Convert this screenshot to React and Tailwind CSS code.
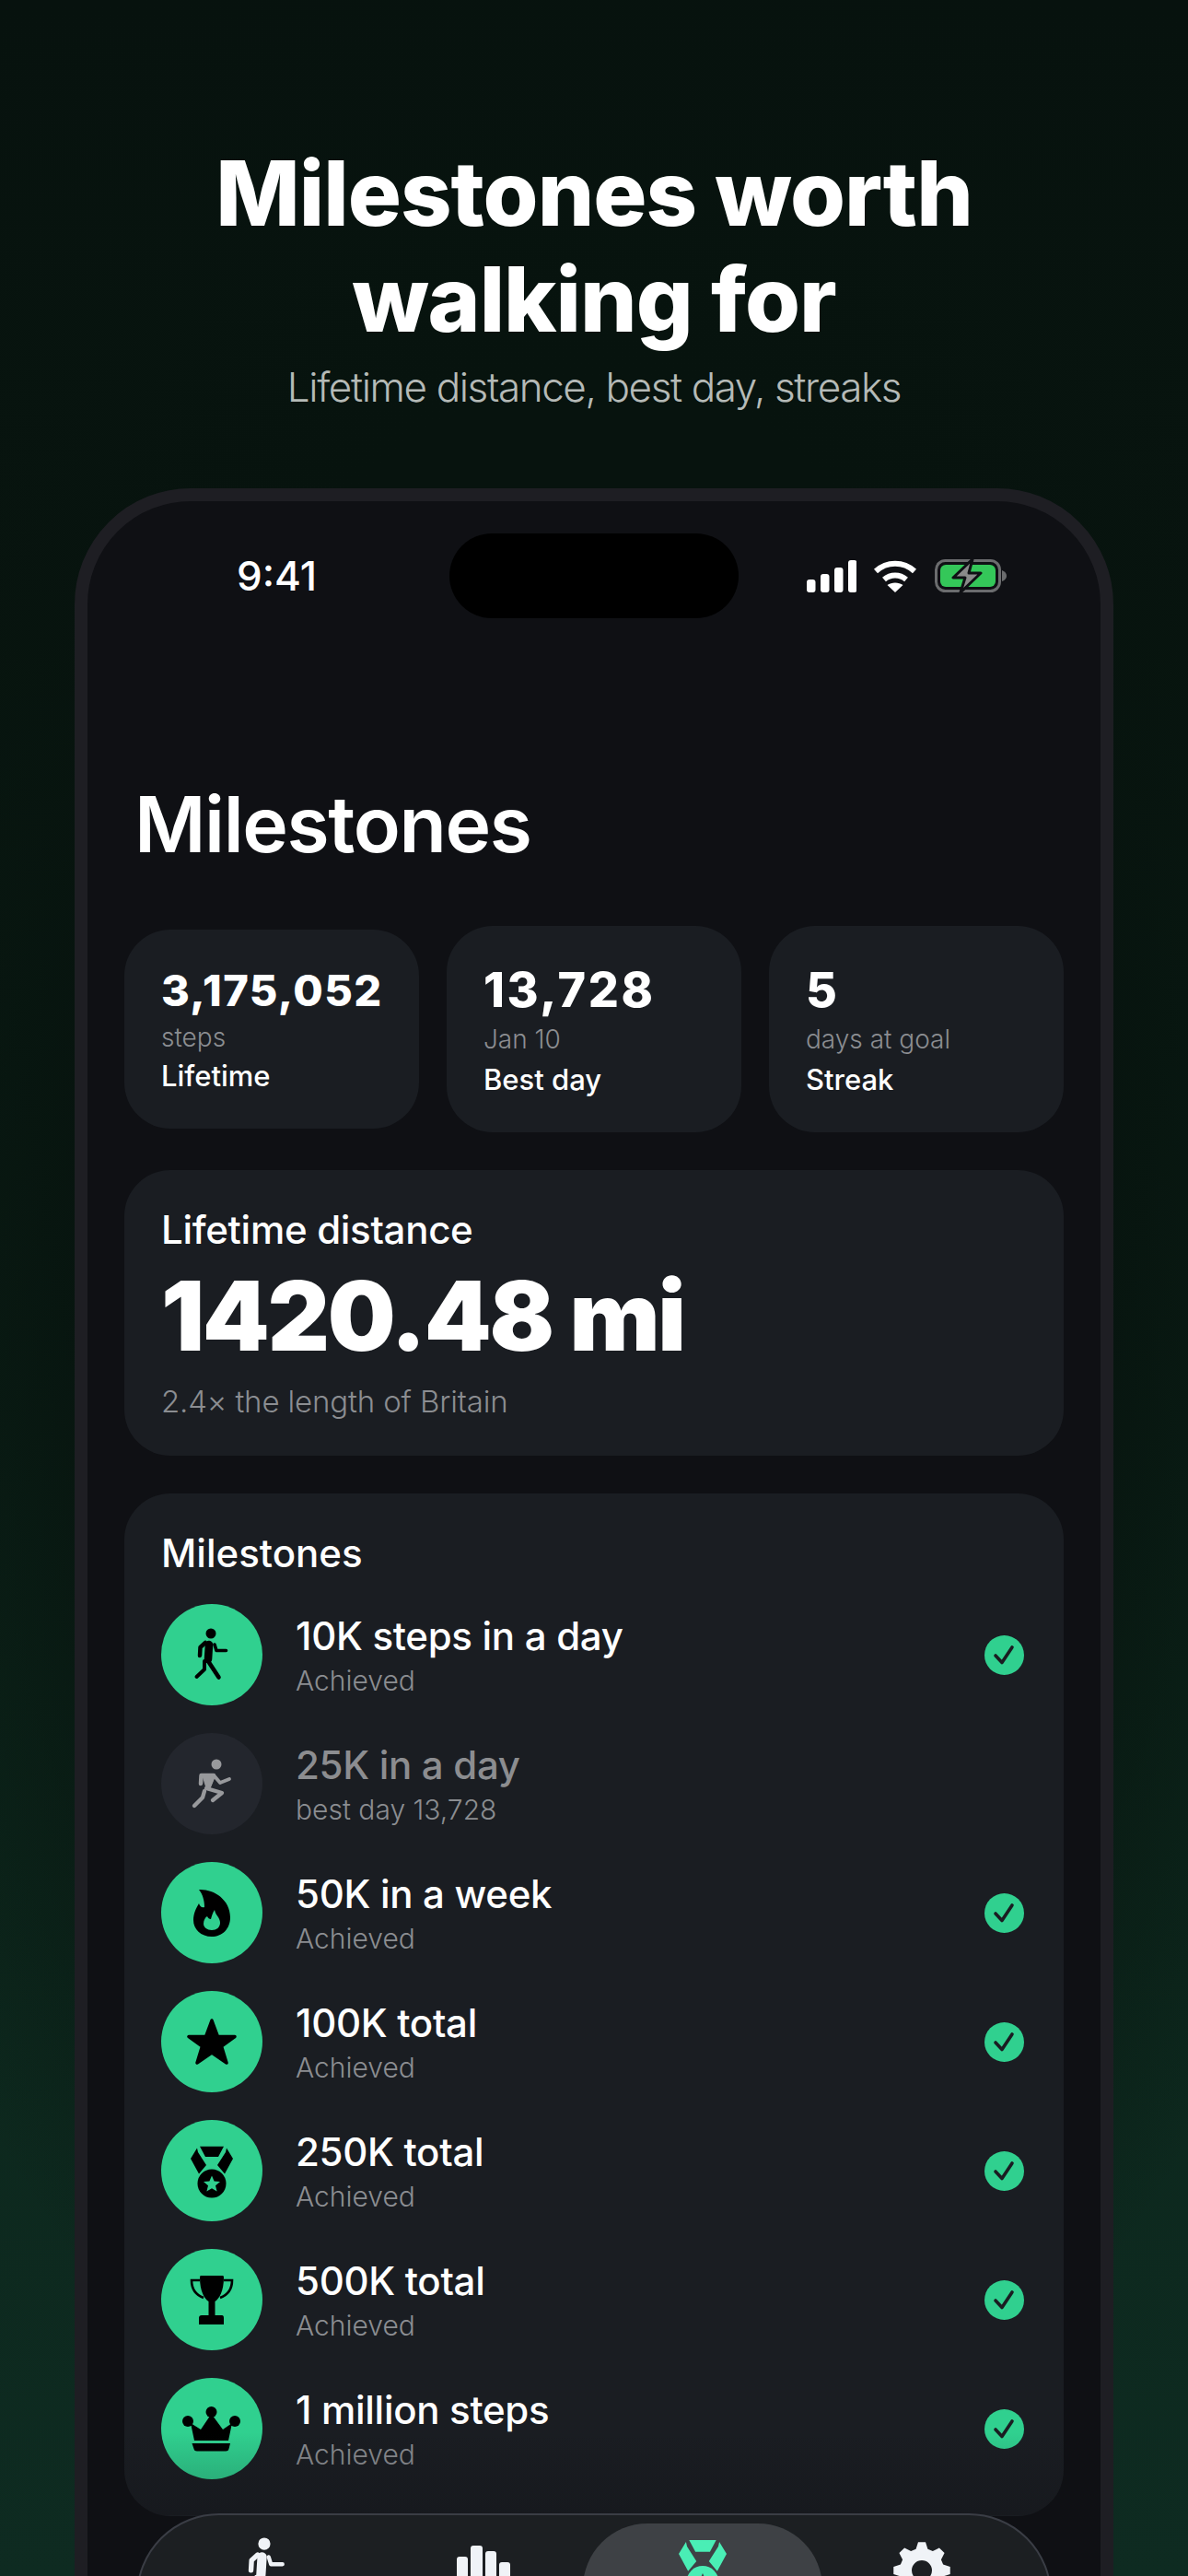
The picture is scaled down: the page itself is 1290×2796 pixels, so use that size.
const gearPath = (() => {
  // 8 tooth gear around 40,40
  const teeth = 8, R = 31, root = 24
  let d = ''
  for (let i = 0; i < teeth; i++) {
    const a = (i / teeth) * Math.PI * 2 - Math.PI / 2
    const pts = [[root, -0.27], [R, -0.13], [R, 0.13], [root, 0.27]]
    pts.forEach(([r, o], j) => {
      const x = (40 + r * Math.cos(a + o)).toFixed(2)
      const y = (40 + r * Math.sin(a + o)).toFixed(2)
      d += (i === 0 && j === 0 ? 'M' : 'L') + x + ' ' + y + ' '
    })
  }
  return d + 'Z M51 40 A11 11 0 1 0 29 40 A11 11 0 1 0 51 40 Z'
})()

function Walk({ c }) {
  return (
    <g fill="none" stroke={c} strokeLinecap="round" strokeLinejoin="round">
      <circle cx="54" cy="32" r="5.5" fill={c} stroke="none" />
      <path d="M52 44 L51 60" strokeWidth="8.5" />
      <path d="M48 42 L42.5 47 L42 56" strokeWidth="4.5" />
      <path d="M58 44 L60 50.5 L70.5 50.5" strokeWidth="3.6" />
      <path d="M47 62 L47 71 L38.5 79" strokeWidth="4" />
      <path d="M51 62 L62.5 79.5" strokeWidth="4.6" />
    </g>
  )
}

function Run({ c }) {
  return (
    <g fill="none" stroke={c} strokeLinecap="round" strokeLinejoin="round">
      <circle cx="60" cy="34" r="5.5" fill={c} stroke="none" />
      <path d="M43 55 L43.5 46 L57 46 L52 58" strokeWidth="4.5" />
      <path d="M47 47 L56 47 L51 60 Z" fill={c} strokeWidth="4.5" />
      <path d="M58 47 L64 54 L74 50" strokeWidth="3.8" />
      <path d="M49 60 L66 65 L56 73" strokeWidth="4.4" />
      <path d="M47 63 L45 70 L36 79" strokeWidth="4.4" />
    </g>
  )
}

function Flame() {
  return (
    <g>
      <path fill="#000" d="M41 30 C56 29 75 40 75 60 C75 73 66 81 55 81 C43 81 35 73 35 63 C35 56 38 50 41 45 C42 48 44 50 47 49 C47 42 45 35 41 30 Z" />
      <path fill="#30d08f" d="M58 52 C59 58 64 60 64 66 C64 71 60 74 55 74 C50 74 46 71 46 67 C46 63 48 60 50 59 C51 61 52 62 54 62 C55 58 56 55 58 52 Z" />
    </g>
  )
}

function Star() {
  return <path d="M55 32 L61.5 49.5 L80 49.5 L65.5 60 L71 78 L55 67 L39 78 L44.5 60 L30 49.5 L48.5 49.5 Z" fill="#000" stroke="#000" strokeWidth="3.5" strokeLinejoin="round" />
}

function Medal({ c, hole }) {
  return (
    <g fill={c}>
      <path d="M42 28.7 L68 28.7 L62 40 L48 40 Z" />
      <path d="M39 30.5 L32 42 L41 58.5 L49 49 L40 35 Z" />
      <path d="M71 30.5 L78 42 L69 58.5 L61 49 L70 35 Z" />
      <circle cx="55" cy="69" r="15.5" />
      <path d="M55 60.5 L57.6 66.5 L64 67 L59 71.2 L60.6 77.5 L55 74.2 L49.4 77.5 L51 71.2 L46 67 L52.4 66.5 Z" fill={hole} />
    </g>
  )
}

function Trophy() {
  return (
    <g>
      <path fill="#000" d="M43 29 L67 29 Q68 29 68 31 C68 46 63 54 58.5 57 L58.5 72 L66 72 Q68 72 68 75 L68 82 L41 82 L41 75 Q41 72 44 72 L51.5 72 L51.5 57 C47 54 42 46 42 31 Q42 29 43 29 Z" />
      <path fill="none" stroke="#000" strokeWidth="2.6" d="M42 34 L33 34 C33 44 38 50 46 53 M68 34 L77 34 C77 44 72 50 64 53" />
    </g>
  )
}

function Crown() {
  return (
    <g fill="#000">
      <circle cx="54.5" cy="37" r="6" />
      <circle cx="29" cy="47" r="6" />
      <circle cx="80" cy="47" r="6" />
      <path d="M32 49 L43 56 L54.5 39 L67 56 L77 49 L73 68 L36 68 Z" />
      <path d="M33.5 71 L75 71 L73.5 77 Q73 79.5 70 79.5 L39 79.5 Q36 79.5 35.5 77 Z" />
    </g>
  )
}

const rows = [
  { title: '10K steps in a day', sub: 'Achieved', icon: <Walk c="#000" />, done: true },
  { title: '25K in a day', sub: 'best day 13,728', icon: <Run c="#98999c" />, done: false },
  { title: '50K in a week', sub: 'Achieved', icon: <Flame />, done: true },
  { title: '100K total', sub: 'Achieved', icon: <Star />, done: true },
  { title: '250K total', sub: 'Achieved', icon: <Medal c="#000" hole="#30d08f" />, done: true },
  { title: '500K total', sub: 'Achieved', icon: <Trophy />, done: true },
  { title: '1 million steps', sub: 'Achieved', icon: <Crown />, done: true },
]

function Check() {
  return (
    <svg width="43" height="43" viewBox="0 0 43 43">
      <circle cx="21.5" cy="21.5" r="21.5" fill="#30d08f" />
      <path d="M12 22 L19 29.5 L30 13" fill="none" stroke="#1a1d22" strokeWidth="3.6" strokeLinecap="round" strokeLinejoin="round" />
    </svg>
  )
}

function Row({ title, sub, icon, done }) {
  return (
    <div className="flex h-[110px] items-center">
      <div className={'h-[110px] w-[110px] shrink-0 rounded-full ' + (done ? 'bg-[#30d08f]' : 'bg-[#23262d]')}>
        <svg width="110" height="110" viewBox="0 0 110 110">{icon}</svg>
      </div>
      <div className="ml-[36px] h-[110px] flex-1 pt-[10px]">
        <div className={'text-[42px] leading-[50px] font-medium tracking-[-0.3px] ' + (done ? 'text-white' : 'text-[#8c8d90]')}>{title}</div>
        <div className="mt-[5px] text-[30px] leading-[36px] font-light text-[#8b8d91]">{sub}</div>
      </div>
      {done && <div className="mr-[3px]"><Check /></div>}
    </div>
  )
}

function Stat({ value, sub, label, tall }) {
  return (
    <div className={'w-[320px] rounded-[50px] bg-[#1a1d22] px-[40px] ' + (tall ? 'h-[224px] pt-[44px]' : 'h-[216px] pt-[40px]')}>
      <div className={'leading-[52px] font-extrabold text-white ' + (tall ? 'text-[52px] tracking-[2.6px]' : 'text-[47px] tracking-[1.4px]')}>{value}</div>
      <div className={'text-[28px] leading-[36px] font-light text-[#8b8d91] ' + (tall ? 'mt-[9px]' : 'mt-[7px]')}>{sub}</div>
      <div className={'text-[31px] leading-[38px] font-medium text-white ' + (tall ? 'mt-[7px]' : 'mt-[5px]')}>{label}</div>
    </div>
  )
}

function StatusIcons() {
  return (
    <div className="ml-[74px] flex items-center gap-[19px]">
      <svg width="54" height="35" viewBox="0 0 54 35" fill="#fff">
        <rect x="0" y="21" width="9.5" height="14" rx="3" />
        <rect x="15" y="15" width="9.5" height="20" rx="3" />
        <rect x="30" y="8" width="9.5" height="27" rx="3" />
        <rect x="45" y="0" width="9.5" height="35" rx="3" />
      </svg>
      <svg width="48" height="35" viewBox="0 0 48 35" fill="none" stroke="#fff" className="-ml-[1px]">
        <path d="M3 12 C15 1 33 1 45 12" strokeWidth="6" />
        <path d="M12 21 C19 15 29 15 36 21" strokeWidth="6" />
        <path d="M24 35 L15.5 27 C20 23.5 28 23.5 32.5 27 Z" fill="#fff" stroke="none" />
      </svg>
      <svg width="78" height="36" viewBox="0 0 78 36">
        <rect x="1.5" y="1.5" width="69" height="33" rx="10" fill="none" stroke="#6b6c6e" strokeWidth="3" />
        <rect x="6" y="6" width="60" height="24" rx="6" fill="#34c759" />
        <path d="M73 12 Q78 14 78 18 Q78 22 73 24 Z" fill="#6b6c6e" />
        <path d="M41 0 L20 20 L33 20 L28 36 L50 15 L37 15 Z" fill="#8a8a8a" stroke="#0f1014" strokeWidth="3" strokeLinejoin="round" />
      </svg>
    </div>
  )
}

function Tab({ children, active, box }) {
  return (
    <div className="relative flex h-[120px] w-[238px] justify-center pt-[20px]">
      {active && <div className="absolute -left-[11px] top-[9px] h-[140px] w-[260px] rounded-[80px] bg-[#3e4145]"></div>}
      <svg width="80" height="80" viewBox={box} className="relative">{children}</svg>
    </div>
  )
}

export default function App() {
  return (
    <div className="flex h-[2796px] w-[1290px] flex-col items-center overflow-hidden bg-[radial-gradient(ellipse_70%_55%_at_50%_45%,#07130e_55%,rgba(7,19,14,0)_100%),linear-gradient(180deg,#07120e_0%,#08150f_25%,#0c261b_65%,#0e2b21_100%)] font-[Inter,sans-serif]">
      <h1 className="mt-[152px] text-center text-[97px] leading-[115px] font-extrabold tracking-[-1px] text-white">
        Milestones worth<br />walking for
      </h1>
      <p className="mt-[10px] text-[44px] leading-[56px] font-light tracking-[-1.4px] text-[#b5bab7]">Lifetime distance, best day, streaks</p>

      <div className="relative mt-[82px] h-[2400px] w-[1128px] shrink-0 overflow-hidden rounded-[126px] border-[14px] border-[#1e1e23] bg-[#0f1014] pt-[35px]">
        <div className="flex h-[92px] items-center pl-[162px]">
          <span className="w-[231px] text-[44px] font-medium text-white">9:41</span>
          <div className="h-[92px] w-[314px] rounded-full bg-black"></div>
          <StatusIcons />
        </div>

        <h2 className="mt-[174px] pl-[51px] text-[84px] leading-[100px] font-semibold tracking-[-1.4px] text-white">Milestones</h2>

        <div className="px-[40px]">
          <div className="mt-[60px] flex items-center justify-between">
            <Stat value="3,175,052" sub="steps" label="Lifetime" />
            <Stat value="13,728" sub="Jan 10" label="Best day" tall />
            <Stat value="5" sub="days at goal" label="Streak" tall />
          </div>

          <div className="mt-[41px] h-[310px] rounded-[50px] bg-[#1a1d22] px-[40px] pt-[40px]">
            <div className="text-[42px] leading-[50px] font-medium tracking-[-0.3px] text-white">Lifetime distance</div>
            <div className="mt-[13px] text-[104px] leading-[110px] font-black tracking-[-2.2px] text-white">1420.48 mi</div>
            <div className="mt-[18px] text-[33px] leading-[40px] font-light tracking-[-0.15px] text-[#8b8d91]">2.4× the length of Britain</div>
          </div>

          <div className="mt-[41px] h-[1110px] rounded-[50px] bg-[#1a1d22] px-[40px] pt-[40px]">
            <div className="text-[42px] leading-[50px] font-medium text-white">Milestones</div>
            <div className="mt-[30px] flex flex-col gap-[30px]">
              {rows.map(r => <Row key={r.title} {...r} />)}
            </div>
          </div>
        </div>

        <div className="absolute bottom-[186px] left-0 h-[90px] w-full bg-gradient-to-b from-transparent to-[#0f1014]/30"></div>

        <div className="absolute left-[53px] top-[2184px] flex h-[200px] w-[994px] rounded-[90px] border-2 border-[#3a3d45] bg-[#1c1f22] pl-[18px]">
          <Tab box="20.7 22.8 66.67 66.67"><Walk c="#f0f3f7" /></Tab>
          <Tab box="0 0 80 80">
            <g fill="#f0f3f7">
              <rect x="11" y="25" width="12" height="60" rx="3" />
              <rect x="26" y="13" width="13" height="70" rx="3" />
              <rect x="42" y="19" width="12" height="70" rx="3" />
              <rect x="57" y="31" width="12" height="60" rx="3" />
            </g>
          </Tab>
          <Tab box="19.6 22.5 70.8 70.8" active><Medal c="#4aeeb5" hole="#3e4145" /></Tab>
          <Tab box="0 0 80 80"><path d={gearPath} fill="#f0f3f7" fillRule="evenodd" /></Tab>
        </div>
      </div>
    </div>
  )
}
